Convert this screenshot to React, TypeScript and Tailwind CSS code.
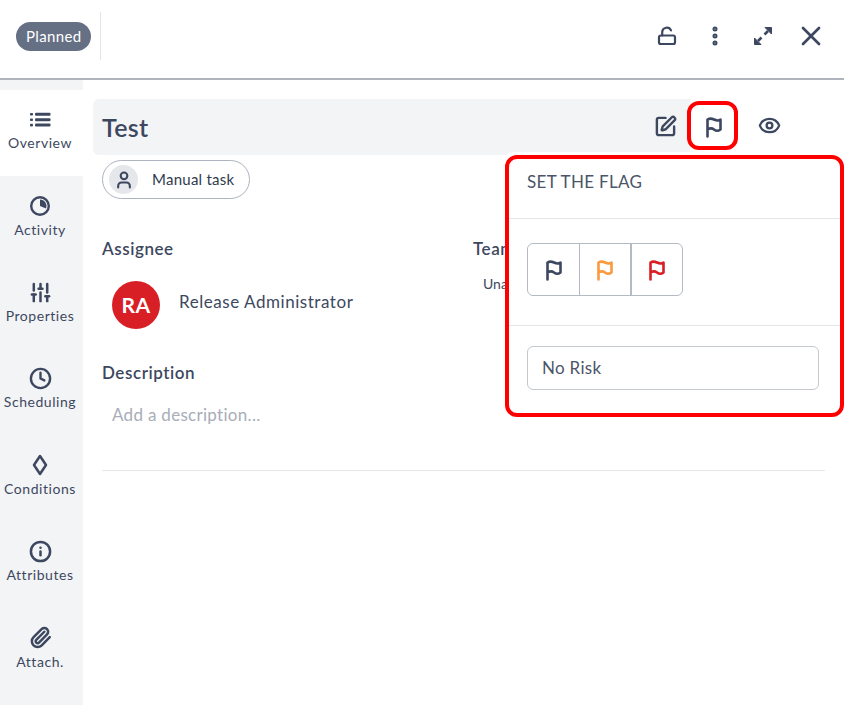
import { Clock, Eye, EllipsisVertical, Info, Paperclip, SlidersVertical, SquarePen, User, X } from "lucide-react";
import type { ReactNode } from "react";

function ListIcon() {
  return (
    <svg width="21" height="15" viewBox="0 0 21 15" fill="currentColor">
      <rect x="0" y="1" width="3" height="2.6" rx="0.8" />
      <rect x="0" y="6.4" width="3" height="2.6" rx="0.8" />
      <rect x="0" y="11.8" width="3" height="2.6" rx="0.8" />
      <rect x="5" y="0.8" width="15.5" height="3" rx="1" />
      <rect x="5" y="6.2" width="15.5" height="3" rx="1" />
      <rect x="5" y="11.6" width="15.5" height="3" rx="1" />
    </svg>
  );
}

function ActivityIcon() {
  return (
    <svg width="22" height="22" viewBox="0 0 22 22" fill="none">
      <circle cx="11" cy="11" r="8.8" stroke="currentColor" strokeWidth="2.4" />
      <path d="M11 4.5a6.5 6.5 0 0 1 6 9L11 11z" fill="currentColor" />
    </svg>
  );
}

function DiamondIcon() {
  return (
    <svg width="16" height="22" viewBox="0 0 16 22" fill="none">
      <path d="M8 2l6 9-6 9-6-9z" stroke="currentColor" strokeWidth="2.5" strokeLinejoin="round" />
    </svg>
  );
}

function FlagIcon({ className }: { className?: string }) {
  return (
    <svg width="18" height="22" viewBox="0 0 18 22" fill="none" className={className}>
      <path
        d="M2.5 20.5V3.5c2.5-1.5 4.5-1 6.5 0s4.5 1.5 6.5 0v10c-2 1.5-4.5 1.5-6.5 0s-4-1.5-6.5 0"
        stroke="currentColor"
        strokeWidth="2.6"
        strokeLinecap="round"
        strokeLinejoin="round"
      />
    </svg>
  );
}

function LockIcon() {
  return (
    <svg width="20" height="20" viewBox="0 0 20 20" fill="none" stroke="currentColor" strokeWidth="2.2">
      <rect x="2" y="9.5" width="16" height="8.5" rx="1.8" />
      <path d="M5.2 9.5V6a4.6 4.6 0 0 1 8.8-1.6" strokeLinecap="round" />
    </svg>
  );
}

function ExpandIcon() {
  return (
    <svg width="20" height="20" viewBox="0 0 20 20" fill="currentColor" stroke="currentColor" strokeWidth="1" strokeLinejoin="round">
      <path d="M12 1.5h6.5V8z" />
      <path d="M1.5 12v6.5H8z" />
      <path d="M11.5 8.5l3.5-3.5M8.5 11.5l-3.5 3.5" strokeWidth="2.6" />
    </svg>
  );
}

const navItems: { label: string; icon: ReactNode }[] = [
  { label: "Overview", icon: <ListIcon /> },
  { label: "Activity", icon: <ActivityIcon /> },
  { label: "Properties", icon: <SlidersVertical size={23} strokeWidth={2.6} /> },
  { label: "Scheduling", icon: <Clock size={23} strokeWidth={2.5} /> },
  { label: "Conditions", icon: <DiamondIcon /> },
  { label: "Attributes", icon: <Info size={23} strokeWidth={2.6} /> },
  { label: "Attach.", icon: <Paperclip size={23} strokeWidth={2.6} /> },
];

export default function App() {
  return (
    <div className="relative h-[705px] w-[844px] overflow-hidden bg-white font-['Lato',sans-serif] text-[#3d4860]">
      <header className="flex h-[80px] items-center border-b-2 border-[#b0b5bd] pb-[6px] pl-4 pr-[17px]">
        <span className="rounded-full bg-[#667085] px-[10px] py-[5px] text-[15px] leading-[19px] tracking-[0.35px] text-white">Planned</span>
        <div className="ml-[9px] h-12 w-px bg-[#e2e4e8]" />
        <div className="ml-auto flex items-center">
          <LockIcon />
          <EllipsisVertical size={24} strokeWidth={3} className="ml-[26px]" />
          <span className="ml-[26px]"><ExpandIcon /></span>
          <X size={32} strokeWidth={2} className="ml-[22px]" />
        </div>
      </header>

      <div className="flex">
        <nav className="h-[625px] w-[83px] bg-[#f3f4f6] pt-[10px]">
          {navItems.map((item, i) => (
            <div
              key={item.label}
              className={`flex h-[86.4px] flex-col items-center pr-[3px] pt-[17.3px] ${i === 0 ? "bg-white" : ""}`}
            >
              <div className="flex h-6 items-center justify-center">{item.icon}</div>
              <span className="mt-[3px] whitespace-nowrap text-[14px] leading-[18px] tracking-[0.55px]">{item.label}</span>
            </div>
          ))}
        </nav>

        <main className="flex-1 pl-[10px] pr-[19px] pt-[19px]">
          <div className="flex h-[56px] w-[597px] items-center rounded-l-md bg-[#f3f4f6] pl-[9px]">
            <h1 className="text-[25px] font-semibold leading-none tracking-[0.3px]">Test</h1>
          </div>
          <div className="ml-[9px] mt-[5px] flex h-[39px] w-[148px] items-center rounded-full border border-[#aeb3bf] pl-[6px]">
            <span className="flex h-[29px] w-[29px] items-center justify-center rounded-full bg-[#e5e7eb]">
              <User size={20} strokeWidth={2.5} />
            </span>
            <span className="ml-[14px] text-[15px] tracking-[0.25px] text-[#2f3a50]">Manual task</span>
          </div>

          <div className="ml-[9px] mt-[39px] flex">
            <div className="w-[371px]">
              <h2 className="text-[17px] font-semibold leading-[22px] tracking-[0.55px]">Assignee</h2>
              <div className="mt-[21px] flex items-center pl-[10px]">
                <span className="flex h-12 w-12 items-center justify-center rounded-full bg-[#d81f26] text-[21px] font-bold tracking-[0.4px] text-white">RA</span>
                <span className="mb-[6px] ml-[19px] text-[17px] tracking-[0.55px]">Release Administrator</span>
              </div>
            </div>
            <div>
              <h2 className="text-[17px] font-semibold leading-[22px] tracking-[0.55px]">Team</h2>
              <p className="ml-[10px] mt-[13px] text-[14px]">Unassigned</p>
            </div>
          </div>

          <h2 className="ml-[9px] mt-[33px] text-[17px] font-semibold leading-[22px] tracking-[0.55px]">Description</h2>
          <p className="ml-[19px] mt-[20px] text-[17px] leading-[22px] tracking-[0.3px] text-[#a8adb8]">Add a description...</p>
          <div className="ml-[9px] mt-[44px] border-t border-[#e5e7eb]" />
        </main>
      </div>

      {/* icons sitting at the right end of the title bar */}
      <div className="absolute left-[654px] top-[114px] flex items-center">
        <SquarePen size={23} strokeWidth={2.5} />
        <FlagIcon className="ml-[28px] mt-[2px]" />
        <Eye size={23} strokeWidth={2.4} className="-mt-[2px] ml-[35px]" />
      </div>
      <div className="absolute left-[687px] top-[101px] h-[49px] w-[51px] rounded-[12px] border-4 border-[#ff0000]" />

      {/* flag popover */}
      <div className="absolute left-[505px] top-[152px] w-[339px] rounded-t-[8px] bg-white pt-[3px]">
        <div className="h-[262px] rounded-[12px] border-4 border-[#ff0000] bg-white">
          <div className="h-[60px] border-b border-[#e5e7eb] pl-[18px] pt-[12px] text-[17px] leading-[22px] tracking-[0.3px] text-[#4b5568]">SET THE FLAG</div>
          <div className="h-[107px] border-b border-[#e5e7eb] pl-[18px] pt-[24px]">
            <div className="flex h-[53px] w-[156px] rounded-md border border-[#b4bac4]">
              <div className="flex w-[52px] shrink-0 items-center justify-center border-r border-[#b4bac4]">
                <FlagIcon className="text-[#3d4860]" />
              </div>
              <div className="flex w-[52px] shrink-0 items-center justify-center border-r-2 border-[#b4bac4]">
                <FlagIcon className="text-[#fb9a3c]" />
              </div>
              <div className="flex flex-1 items-center justify-center">
                <FlagIcon className="text-[#d81f26]" />
              </div>
            </div>
          </div>
          <div className="pl-[18px] pt-[20px]">
            <div className="flex h-[44px] w-[292px] items-center rounded-md border border-[#c4c8cf] pl-[14px] text-[17px] tracking-[0.3px] text-[#4b5568]">No Risk</div>
          </div>
        </div>
      </div>
    </div>
  );
}
